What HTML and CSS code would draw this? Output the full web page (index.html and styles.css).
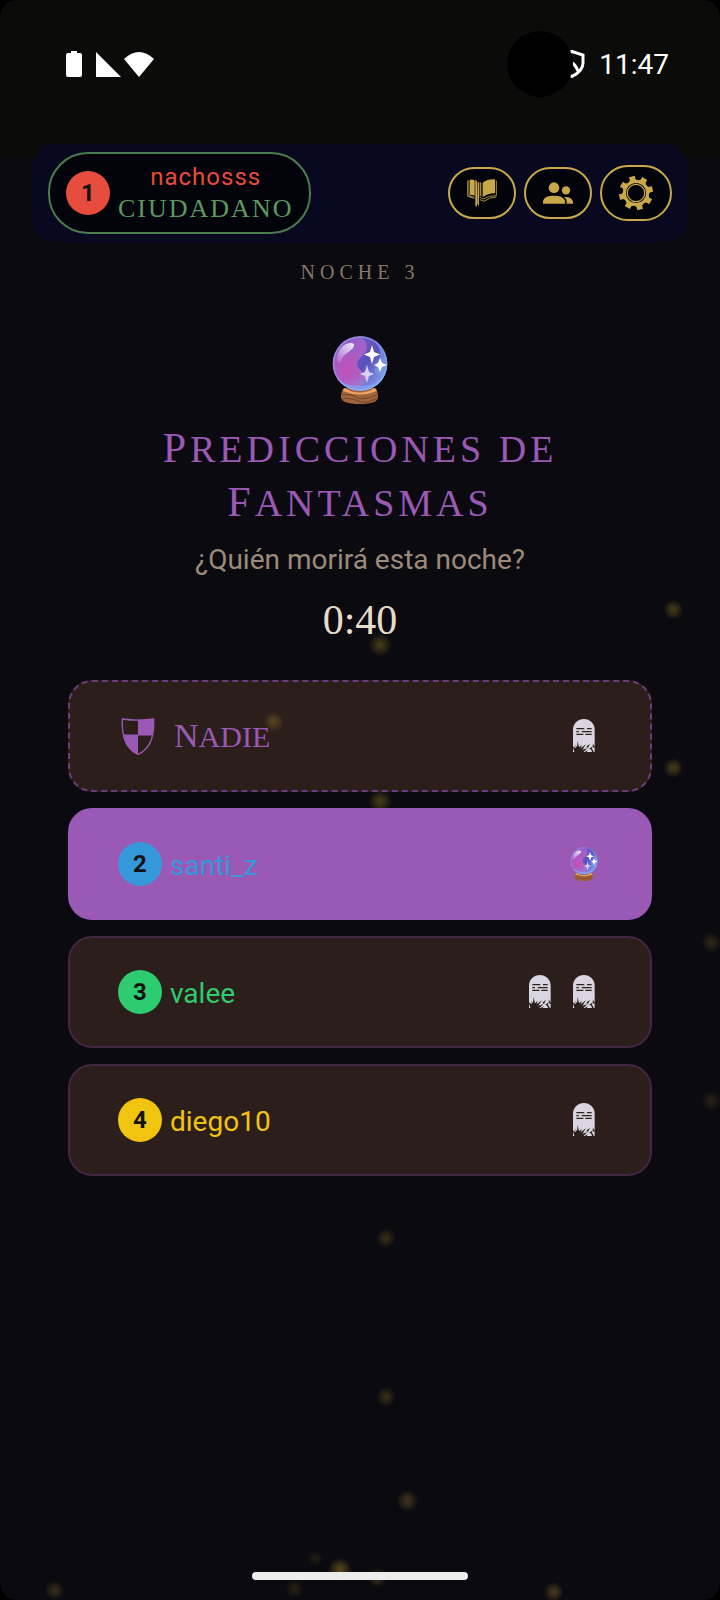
FILE: index.html
```html
<!DOCTYPE html>
<html lang="es">
<head>
    <meta charset="UTF-8">
    <meta name="viewport" content="width=device-width, initial-scale=1.0">
    <title>Predicciones de Fantasmas</title>
    <link rel="stylesheet" href="styles.css">
</head>
<body>
    <!-- Shared icons -->
    <svg class="icon-defs" aria-hidden="true">
        <defs>
            <linearGradient id="ballFill" x1="0" y1="0" x2="1" y2="1">
                <stop offset="0" stop-color="#8a5fd0"/>
                <stop offset="0.45" stop-color="#a860c8"/>
                <stop offset="1" stop-color="#80a8ea"/>
            </linearGradient>
            <radialGradient id="ballPink" cx="0.5" cy="0.5" r="0.5">
                <stop offset="0" stop-color="#c050b8"/>
                <stop offset="1" stop-color="#c050b8" stop-opacity="0"/>
            </radialGradient>
            <linearGradient id="ballSwirl" x1="0" y1="0" x2="0.6" y2="1">
                <stop offset="0" stop-color="#7a58c4"/>
                <stop offset="0.5" stop-color="#5a50bc"/>
                <stop offset="1" stop-color="#80a0ec"/>
            </linearGradient>
            <linearGradient id="ballShine" x1="1" y1="0" x2="0" y2="1">
                <stop offset="0" stop-color="#fff"/>
                <stop offset="1" stop-color="#fff" stop-opacity="0.1"/>
            </linearGradient>
            <radialGradient id="sparkFill">
                <stop offset="0" stop-color="#8a6d22" stop-opacity="0.6"/>
                <stop offset="0.4" stop-color="#8a6d22" stop-opacity="0.4"/>
                <stop offset="1" stop-color="#8a6d22" stop-opacity="0"/>
            </radialGradient>
            <clipPath id="ballClip">
                <circle cx="36" cy="29.500" r="27.500"/>
            </clipPath>
        </defs>
        <symbol id="crystal-ball" viewBox="0 0 72 72">
            <path d="M20 54 Q17 57 17 63 Q17 70 36 70 Q54 70 54 63 Q54 57 51 54Z" fill="#a0643c"/>
            <path d="M20 54 Q36 63 51 54 L53 57 Q36 64 19 57Z" fill="#f0a468"/>
            <path d="M18 61 Q26 59 32 63 T53 61 M18 65 Q27 63 34 67 T53 64" fill="none" stroke="#7a4a2c" stroke-width="1.200"/>
            <g clip-path="url(#ballClip)">
                <circle cx="36" cy="29.500" r="27.500" fill="url(#ballFill)"/>
                <circle cx="24" cy="36" r="22" fill="url(#ballPink)"/>
                <path d="M36 2 C45 9 45 16 38 22 C30 29 33 34 40 39 C46 44 40 50 32 56 C51 59 64 45 63.500 29 C63 12 50 2 36 2Z" fill="url(#ballSwirl)"/>
                <path d="M49 6 C61 17 55 27 51 34 C49 41 57 43 61 41 C65 29 62 13 49 6Z" fill="#80a5ea" opacity="0.55"/>
                <path d="M12 44 Q22 58 38 57 Q56 54 61 40 Q54 51 38 52 Q22 53 12 44Z" fill="#88a0ee" opacity="0.8"/>
            </g>
            <circle cx="36" cy="29.500" r="26.500" fill="none" stroke="#88c4f4" stroke-width="1.500" opacity="0.45"/>
            <path d="M13 27 C12 17 20 8 28 9 C34 11 26 17 22 20 C17 23 16 32 13 27Z" fill="url(#ballShine)" opacity="0.9"/>
            <path d="M48 11 L50 18 L56 20.500 L50 23 L48 30 L46 23 L40 20.500 L46 18Z" fill="#fff"/>
            <path d="M56 24 L58 29 L63 31 L58 33 L56 38 L54 33 L50 31 L54 29Z" fill="#fff"/>
            <path d="M43 31 L45 38 L50 40 L45 42 L43 49 L41 42 L36 40 L41 38Z" fill="#dcd0f4"/>
        </symbol>
        <symbol id="tombstone" viewBox="0 0 108 108">
            <path d="M21 102 V35 A32.500 32 0 0 1 86 35 V102Z" fill="#d9d6e2"/>
            <path d="M31 32H55M63 32H77M31 41H39M47 41H77M31 49H52M58 49H77" stroke="#2c211d" stroke-width="3.500"/>
            <path d="M26 104 L20 85 L30 91 L28 80 L33 88 L35 70 L39 88 L47 80 L44 91 L60 79 L49 95 L64 91 L50 104Z" fill="#2c1f1b"/>
            <path d="M52 104 L66 96 L60 104ZM61 86 L72 77 L66 90ZM69 92 L88 80 L77 90 L85 104 H80 L74 94ZM80 76 L88 91 L81 88Z" fill="#2c1f1b"/>
        </symbol>
    </svg>

    <div class="app">
        <div class="status-bar">
            <div class="status-icons">
                <svg class="battery" viewBox="0 0 16 26"><path d="M5 0h6v2h3q2 0 2 2v20q0 2-2 2H2q-2 0-2-2V4q0-2 2-2h3z" fill="#fff"/></svg>
                <svg class="signal" viewBox="0 0 25 25"><path d="M0 0 L25 25 H0Z" fill="#fff"/></svg>
                <svg class="wifi" viewBox="0 0 30 25"><path d="M0 7 Q15 -7 30 7 L15 25Z" fill="#fff"/></svg>
            </div>
            <div class="status-right">
                <div class="camera"></div>
                <svg class="vpn" viewBox="0 0 26 28"><path d="M13 1.500 L24 5 V13 Q24 21 13 26.500 Q2 21 2 13 V5Z M13 13 Q16 14 19 21" fill="none" stroke="#fff" stroke-width="3"/></svg>
                <span>11:47</span>
            </div>
        </div>

        <header class="top-bar">
            <div class="player-chip">
                <span class="badge red">1</span>
                <div class="player-info">
                    <span class="player-name">nachosss</span>
                    <span class="player-role">CIUDADANO</span>
                </div>
            </div>
            <nav class="actions">
                <button class="round-button" aria-label="Reglas">
                    <svg width="30" height="28" viewBox="0 0 90 84" fill="#c9a84c">
                        <path d="M9 2 Q17 0 23 5 V51 Q17 46 9 48Z"/>
                        <path d="M25 2 L30 6 V82 H25Z M32 8 L36 11 V80 L31 74Z"/>
                        <path d="M47 11 Q60 0 84 1 V43 Q61 43 47 55Z"/>
                        <path d="M38 8 L43 11 V55 L38 49Z" opacity="0.8"/>
                        <path d="M2 5V52L22 58M6 3V50L22 55M88 5V50Q66 49 49 60L38 55M88 54Q68 54 51 67L39 62" fill="none" stroke="#c9a84c" stroke-width="2.500"/>
                    </svg>
                </button>
                <button class="round-button" aria-label="Jugadores">
                    <svg width="30" height="22" viewBox="0 0 90 66" fill="#c9a84c">
                        <circle cx="33" cy="17" r="16"/>
                        <circle cx="69" cy="25" r="12.500"/>
                        <path d="M0 65 V57 Q3 41 33 41 Q62 41 66 57 V65Z"/>
                        <path d="M63 45 Q86 43 90 59 V65 H71 V57 Q70 50 63 45Z"/>
                    </svg>
                </button>
                <button class="round-button large" aria-label="Ajustes">
                    <svg width="34" height="34" viewBox="-17 -17 34 34" fill="#c9a84c">
                        <g transform="rotate(-14)">
                            <path id="tooth" d="M-5 -11 L-2.800 -14 L-3 -17 H3 L2.800 -14 L5 -11Z"/>
                            <use href="#tooth" transform="rotate(45)"/>
                            <use href="#tooth" transform="rotate(90)"/>
                            <use href="#tooth" transform="rotate(135)"/>
                            <use href="#tooth" transform="rotate(180)"/>
                            <use href="#tooth" transform="rotate(225)"/>
                            <use href="#tooth" transform="rotate(270)"/>
                            <use href="#tooth" transform="rotate(315)"/>
                        </g>
                        <circle r="11.600" fill="none" stroke="#c9a84c" stroke-width="3"/>
                        <circle r="8.700" fill="none" stroke="#c9a84c" stroke-width="1.200"/>
                    </svg>
                </button>
            </nav>
        </header>

        <main>
            <p class="night">NOCHE 3</p>
            <svg class="phase-icon" role="img" aria-label="Bola de cristal"><use href="#crystal-ball"/></svg>
            <h1><span class="cap">P</span>redicciones de <span class="cap">F</span>antasmas</h1>
            <p class="question">¿Quién morirá esta noche?</p>
            <p class="timer">0:40</p>

            <div class="options">
                <button class="option nobody">
                    <svg class="shield" viewBox="0 0 98 111">
                        <path d="M2 3 Q49 10 96 3 Q100 88 49 109 Q-2 88 2 3Z" fill="none" stroke="#9b59b6" stroke-width="4"/>
                        <path d="M49 7 L96 3 V30 L92 51 H49ZM6 51 H49 V109 Q14 95 6 51Z" fill="#9b59b6"/>
                        <path d="M4 51 H94" stroke="#9b59b6" stroke-width="3"/>
                    </svg>
                    <span class="nobody-name"><span class="cap">N</span>adie</span>
                    <span class="votes"><svg><use href="#tombstone"/></svg></span>
                </button>
                <button class="option selected">
                    <span class="badge blue">2</span>
                    <span class="name blue-text">santi_z</span>
                    <span class="votes"><svg><use href="#crystal-ball"/></svg></span>
                </button>
                <button class="option">
                    <span class="badge green">3</span>
                    <span class="name green-text">valee</span>
                    <span class="votes"><svg><use href="#tombstone"/></svg><svg><use href="#tombstone"/></svg></span>
                </button>
                <button class="option">
                    <span class="badge yellow">4</span>
                    <span class="name yellow-text">diego10</span>
                    <span class="votes"><svg><use href="#tombstone"/></svg></span>
                </button>
            </div>
        </main>

        <!-- Floating fireflies -->
        <svg class="sparks" fill="url(#sparkFill)" aria-hidden="true">
            <circle cx="93.500%" cy="38.100%" r="10" opacity="0.8"/>
            <circle cx="52.800%" cy="40.300%" r="12" opacity="0.8"/>
            <circle cx="38%" cy="45.100%" r="10" opacity="0.8"/>
            <circle cx="93.500%" cy="48%" r="10" opacity="0.8"/>
            <circle cx="52.800%" cy="50.100%" r="12" opacity="0.8"/>
            <circle cx="98.800%" cy="58.900%" r="10" opacity="0.5"/>
            <circle cx="98.800%" cy="68.800%" r="10" opacity="0.4"/>
            <circle cx="53.600%" cy="77.400%" r="10" opacity="0.6"/>
            <circle cx="53.600%" cy="87.300%" r="10" opacity="0.6"/>
            <circle cx="56.600%" cy="93.800%" r="11" opacity="0.7"/>
            <circle cx="43.800%" cy="97.400%" r="8" opacity="0.3"/>
            <circle cx="47.200%" cy="98.100%" r="12"/>
            <circle cx="52.400%" cy="98.600%" r="10" opacity="0.6"/>
            <circle cx="40.900%" cy="99.300%" r="9" opacity="0.4"/>
            <circle cx="7.600%" cy="99.400%" r="10" opacity="0.6"/>
            <circle cx="76.900%" cy="99.500%" r="10" opacity="0.8"/>
        </svg>
        <div class="home-indicator"></div>
    </div>
</body>
</html>
```
FILE: styles.css
```css
* {
    box-sizing: border-box;
}
body {
    margin: 0;
    background: #000000;
    font-family: Roboto, "Liberation Sans", sans-serif;
}
p, h1 {
    margin: 0;
}
button {
    font: inherit;
    cursor: pointer;
}
svg {
    display: block;
}
.icon-defs {
    position: absolute;
    width: 0;
    height: 0;
}
.app {
    position: relative;
    min-height: 100vh;
    padding: 144px 32px 32px;
    background: #0b0a10;
    border-radius: 18px;
    overflow: hidden;
}

/* Status bar, its shade reaches behind the header */
.status-bar {
    position: absolute;
    top: 0;
    left: 0;
    right: 0;
    height: 158px;
    padding: 31px 51px 61px 66px;
    display: flex;
    align-items: center;
    justify-content: space-between;
    background: #0b0b09;
    color: #ffffff;
    font-size: 28px;
}
.status-icons, .status-right {
    display: flex;
    align-items: center;
}
.battery {
    width: 16px;
    height: 26px;
    margin-right: 14px;
}
.signal {
    width: 25px;
    height: 25px;
    margin-right: 3px;
}
.wifi {
    width: 30px;
    height: 25px;
}
.camera {
    position: relative;
    z-index: 1;
    width: 66px;
    height: 66px;
    border-radius: 50%;
    background: #000000;
}
.vpn {
    width: 26px;
    height: 28px;
    margin-left: -14px;
    margin-right: 14px;
}

/* Header */
.top-bar {
    position: relative;
    display: flex;
    align-items: center;
    justify-content: space-between;
    padding: 8px 16px;
    background: rgba(8, 7, 38, 0.8);
    border-radius: 24px;
}
.player-chip {
    display: flex;
    align-items: center;
    gap: 8px;
    padding: 8px 16px;
    background: #03030b;
    border: 2px solid #4a7c4e;
    border-radius: 40px;
}
.player-info {
    display: flex;
    flex-direction: column;
    align-items: center;
    line-height: 31px;
}
.player-name {
    font-size: 24px;
    letter-spacing: 1px;
    color: #e74c3c;
}
.player-role {
    font-family: "Liberation Serif", serif;
    font-size: 26px;
    letter-spacing: 2px;
    color: #5a9a5e;
}
.actions {
    display: flex;
    align-items: center;
    gap: 8px;
}
.round-button {
    display: flex;
    align-items: center;
    justify-content: center;
    width: 68px;
    height: 52px;
    padding: 0;
    background: #03030b;
    border: 2px solid #c9a84c;
    border-radius: 28px;
}
.round-button.large {
    width: 72px;
    height: 56px;
}

.badge {
    display: flex;
    align-items: center;
    justify-content: center;
    width: 44px;
    height: 44px;
    border-radius: 50%;
    font-size: 24px;
    font-weight: bold;
    color: #121212;
}
.red {
    background: #e74c3c;
}
.blue {
    background: #3498db;
}
.green {
    background: #2ecc71;
}
.yellow {
    background: #f1c40f;
}

/* Phase */
main {
    display: flex;
    flex-direction: column;
    align-items: center;
    padding: 16px 36px 0;
    text-align: center;
}
.night {
    font-family: "Liberation Serif", serif;
    font-size: 20px;
    line-height: 28px;
    letter-spacing: 5px;
    color: #877766;
}
.phase-icon {
    width: 72px;
    height: 72px;
    margin: 48px 0 16px;
}
h1 {
    font-family: "Liberation Serif", serif;
    font-size: 38px;
    font-weight: normal;
    line-height: 54px;
    letter-spacing: 4px;
    text-transform: uppercase;
    max-width: 440px;
    color: #9b59b6;
}
h1 .cap {
    font-size: 42px;
    line-height: 0;
}
.question {
    margin-top: 8px;
    font-size: 28px;
    line-height: 44px;
    color: #9c8b78;
}
.timer {
    margin: 10px 0 32px;
    font-family: "Liberation Serif", serif;
    font-size: 42px;
    line-height: 56px;
    color: #e8dcc8;
}

/* Vote options */
.options {
    display: flex;
    flex-direction: column;
    gap: 16px;
    width: 100%;
}
.option {
    display: flex;
    align-items: center;
    gap: 8px;
    min-height: 112px;
    padding: 16px 48px;
    background: #2c1f1b;
    border: 2px solid #422843;
    border-radius: 24px;
}
.option.nobody {
    gap: 16px;
    border: 2px dashed #6a3d7a;
}
.option.selected {
    position: relative;
    z-index: 1;
    background: #9b59b6;
    border-color: #9b59b6;
}
.shield {
    width: 40px;
    height: 37px;
}
.name {
    padding-top: 2px;
    font-size: 28px;
}
.nobody-name {
    font-family: "Liberation Serif", serif;
    font-size: 30px;
    text-transform: uppercase;
    color: #9b59b6;
}
.nobody-name .cap {
    font-size: 34px;
}
.blue-text {
    color: #3498db;
}
.green-text {
    color: #2ecc71;
}
.yellow-text {
    color: #f1c40f;
}
.votes {
    display: flex;
    gap: 8px;
    margin-left: auto;
}
.votes svg {
    width: 36px;
    height: 36px;
}

.sparks {
    position: absolute;
    top: 0;
    left: 0;
    width: 100%;
    height: 100%;
    pointer-events: none;
}
.home-indicator {
    position: absolute;
    z-index: 2;
    left: 35%;
    bottom: 20px;
    width: 30%;
    height: 8px;
    border-radius: 4px;
    background: #ececec;
}
```
